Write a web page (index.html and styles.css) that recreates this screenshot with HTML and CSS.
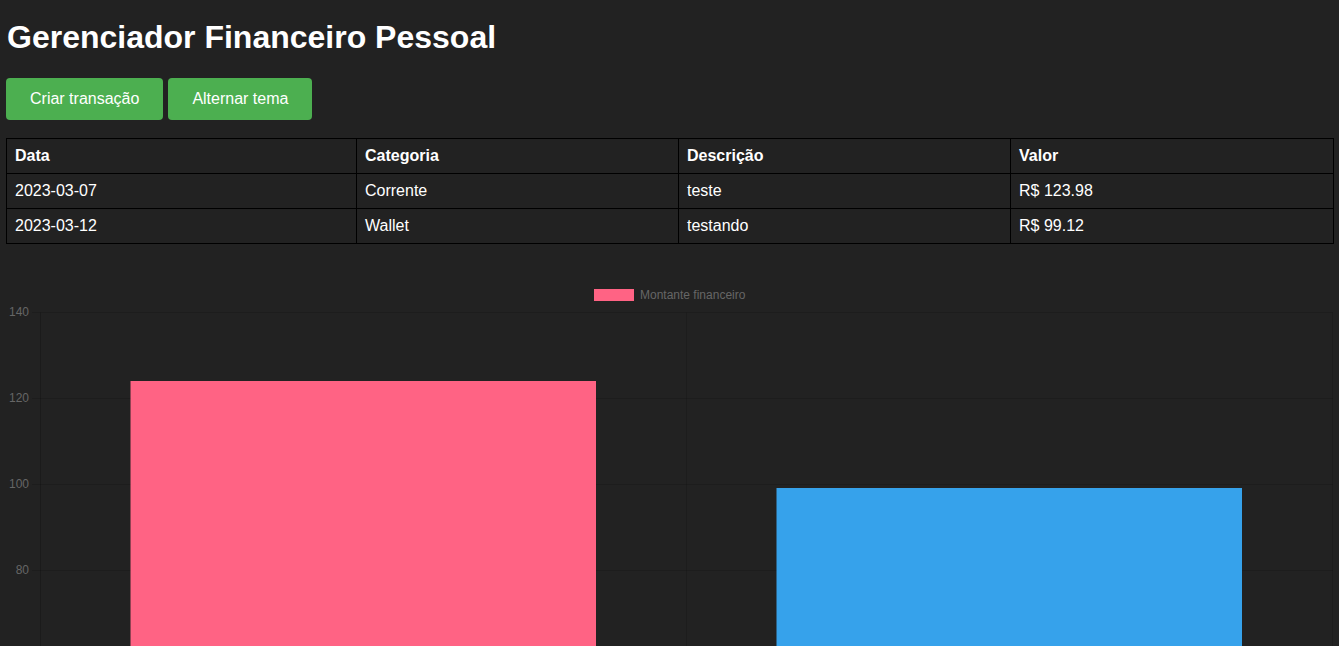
FILE: index.html
```html
<!DOCTYPE html>
<html lang="pt-BR">
<head>
<meta charset="utf-8">
<title>Gerenciador Financeiro Pessoal</title>
<link rel="stylesheet" href="styles.css">
</head>
<body>
<h1 class="title">Gerenciador Financeiro Pessoal</h1>
<div class="actions">
  <button class="btn">Criar transação</button>
  <button class="btn">Alternar tema</button>
</div>
<table class="tx-table">
  <colgroup>
    <col class="c1"><col class="c2"><col class="c3"><col class="c4">
  </colgroup>
  <thead>
    <tr><th>Data</th><th>Categoria</th><th>Descrição</th><th>Valor</th></tr>
  </thead>
  <tbody>
    <tr><td>2023-03-07</td><td>Corrente</td><td>teste</td><td>R$ 123.98</td></tr>
    <tr><td>2023-03-12</td><td>Wallet</td><td>testando</td><td>R$ 99.12</td></tr>
  </tbody>
</table>
<div class="chart">
  <svg class="chart-svg" width="1327" height="364" viewBox="0 0 1327 364" xmlns="http://www.w3.org/2000/svg">
    <rect x="588.5" y="6.5" width="39" height="11" fill="#FF6384" stroke="#FF6384" stroke-width="1"/>
    <text x="634" y="16" class="legend-text">Montante financeiro</text>
    <g stroke="rgba(0,0,0,0.12)" stroke-width="1">
      <line x1="26" y1="29.5" x2="1327" y2="29.5"/>
      <line x1="26" y1="115.5" x2="1327" y2="115.5"/>
      <line x1="26" y1="201.5" x2="1327" y2="201.5"/>
      <line x1="26" y1="287.5" x2="1327" y2="287.5"/>
      <line x1="680.5" y1="29.5" x2="680.5" y2="364"/>
      <line x1="1326.5" y1="29.5" x2="1326.5" y2="364"/>
    </g>
    <line x1="34.5" y1="29.5" x2="34.5" y2="364" stroke="rgba(0,0,0,0.2)" stroke-width="1"/>
    <g class="tick">
      <text x="23" y="33">140</text>
      <text x="23" y="119">120</text>
      <text x="23" y="205">100</text>
      <text x="23" y="291">80</text>
    </g>
    <rect x="124.5" y="98" width="465.5" height="270" fill="#FF6384"/>
    <rect x="770.5" y="205" width="465.5" height="170" fill="#36A2EB"/>
  </svg>
</div>
</body>
</html>
```

FILE: styles.css
```css
html, body {
  background: #222222;
}
body {
  margin: 0;
  padding: 0 6px;
  color: #ffffff;
  font-family: "Liberation Sans", Arial, sans-serif;
  overflow: hidden;
}
.title {
  margin: 19px 0 22px 1px;
  font-size: 32px;
  font-weight: bold;
  line-height: normal;
}
.actions {
  display: flex;
  gap: 5px;
}
.btn {
  background: #4CAF50;
  color: #ffffff;
  border: none;
  border-radius: 4px;
  padding: 12px 24px;
  font-family: "Liberation Sans", Arial, sans-serif;
  font-size: 16px;
  line-height: 18px;
  cursor: pointer;
}
.tx-table {
  margin-top: 18px;
  width: 1327px;
  border-collapse: collapse;
  table-layout: fixed;
  font-size: 16px;
}
.c1 { width: 350px; }
.c2 { width: 322px; }
.c3 { width: 332px; }
.c4 { width: 323px; }
.tx-table th,
.tx-table td {
  border: 1px solid #000000;
  padding: 8px;
  text-align: left;
  line-height: 18px;
}
.tx-table th {
  font-weight: bold;
}
.chart {
  margin-top: 39px;
}
.chart-svg {
  display: block;
}
.legend-text {
  font-family: "Liberation Sans", Arial, sans-serif;
  font-size: 12px;
  fill: #666666;
}
.tick text {
  font-family: "Liberation Sans", Arial, sans-serif;
  font-size: 12px;
  fill: #666666;
  text-anchor: end;
}
```
